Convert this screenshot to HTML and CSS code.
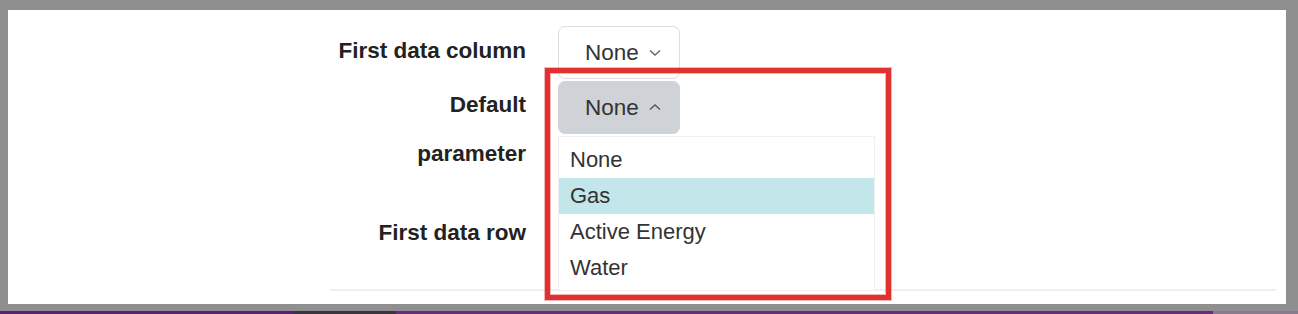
FILE: index.html
```html
<!DOCTYPE html>
<html lang="en">
<head>
    <meta charset="UTF-8">
    <meta name="viewport" content="width=device-width, initial-scale=1.0">
    <title>Import settings</title>
    <link rel="stylesheet" href="styles.css">
</head>
<body>
<div class="panel">
    <div class="form-row">
        <label class="row-label">First data column</label>
        <div class="control">
            <button class="select-btn">None
                <svg class="chevron" width="14" height="9" viewBox="0 0 14 9"><path d="M2 2.5 L7 7 L12 2.5" fill="none" stroke="#666" stroke-width="1.4"/></svg>
            </button>
        </div>
    </div>
    <div class="form-row row-default">
        <label class="row-label">Default<br>parameter</label>
        <div class="control">
            <button class="select-btn open">None
                <svg class="chevron" width="14" height="9" viewBox="0 0 14 9"><path d="M2 6.5 L7 2 L12 6.5" fill="none" stroke="#555" stroke-width="1.4"/></svg>
            </button>
        </div>
    </div>
    <div class="form-row row-first">
        <label class="row-label">First data row</label>
        <div class="control">
            <input type="text" class="text-input" value="1">
        </div>
    </div>
    <div class="separator"></div>

    <!-- open dropdown of "Default parameter" -->
    <ul class="dropdown">
        <li>None</li>
        <li class="active">Gas</li>
        <li>Active Energy</li>
        <li>Water</li>
    </ul>
    <div class="highlight"></div>
</div>
<div class="taskbar"></div>
</body>
</html>
```

FILE: styles.css
```css
/* page frame */
body {
    margin: 0;
    height: 314px;
    background: #8f8f8f;
    font-family: 'Liberation Sans', Arial, sans-serif;
    overflow: hidden;
    position: relative;
}

.panel {
    position: relative;
    box-sizing: border-box;
    height: 294px;
    margin: 10px 12px 0 8px;
    padding-top: 16px;
    background: #fff;
}

.taskbar {
    position: absolute;
    left: 0;
    right: 0;
    bottom: 0;
    height: 3px;
    background: linear-gradient(90deg, #5b1e7c 0, #5b1e7c 294px, #3a3340 294px, #3a3340 396px, #6a2a84 396px, #6a2a84 1213px, #8a7a90 1213px);
}

/* form rows */
.form-row {
    display: grid;
    grid-template-columns: 518px 1fr;
    column-gap: 32px;
    align-items: start;
}

.row-label {
    text-align: right;
    font-weight: bold;
    font-size: 22.5px;
    line-height: 49px;
    color: #222;
}

.row-default {
    margin-top: 2px;
}

.row-default .row-label {
    margin-top: -1px;
}

.row-first {
    margin-top: 30px;
}

.select-btn {
    display: flex;
    align-items: center;
    gap: 9px;
    box-sizing: border-box;
    width: 122px;
    height: 53px;
    padding: 0 0 0 26px;
    border: 1px solid #dedede;
    border-radius: 7px;
    background: #fff;
    font-family: 'Liberation Sans', Arial, sans-serif;
    font-size: 22.5px;
    color: #333;
}

.select-btn.open {
    background: #cfd2d6;
    border-color: #cfd2d6;
}

.chevron {
    display: block;
}

.text-input {
    box-sizing: border-box;
    width: 200px;
    height: 49px;
    border: 1px solid #dedede;
    border-radius: 7px;
}

.separator {
    margin: 32px 10px 0 322px;
    border-top: 2px solid #efefef;
}

/* open dropdown overlay */
.dropdown {
    position: absolute;
    left: 550px;
    top: 126px;
    width: 315px;
    margin: 0;
    padding: 5px 0 4px;
    list-style: none;
    background: #fff;
    border: 1px solid #f0f0f0;
    font-family: 'Liberation Sans', Arial, sans-serif;
    font-size: 22px;
    color: #333;
}

.dropdown li {
    height: 36px;
    line-height: 36px;
    padding-left: 11px;
}

.dropdown li.active {
    background: #c3e6ea;
}

/* red annotation box */
.highlight {
    position: absolute;
    left: 537px;
    top: 58px;
    width: 346px;
    height: 232px;
    box-sizing: border-box;
    border: 5px solid #e0302f;
    box-shadow: 0 0 0 1px rgba(230, 90, 90, 0.45), inset 0 0 0 1px rgba(230, 90, 90, 0.45);
}
```
